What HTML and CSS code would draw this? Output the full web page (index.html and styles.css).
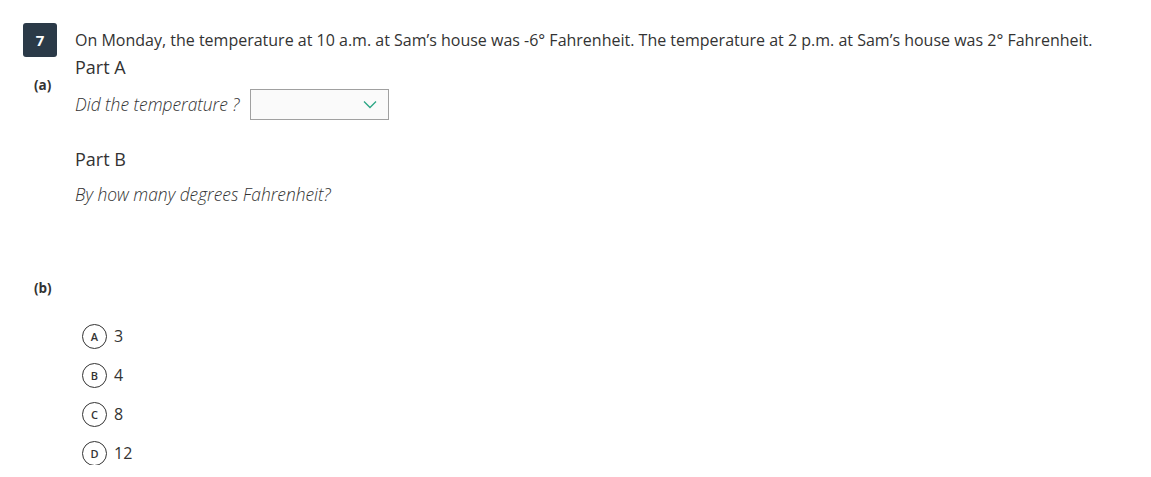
FILE: index.html
```html
<!DOCTYPE html>
<html>
<head>
<meta charset="utf-8">
<link rel="stylesheet" href="styles.css">
</head>
<body>
<div class="question">
  <div class="stem-row">
    <div class="gutter"><div class="badge">7</div></div>
    <div class="stem">On Monday, the temperature at 10 a.m. at Sam’s house was -6° Fahrenheit. The temperature at 2 p.m. at Sam’s house was 2° Fahrenheit.</div>
  </div>
  <div class="part part-a">
    <div class="gutter"><div class="label">(a)</div></div>
    <div class="content">
      <div class="part-title">Part A</div>
      <div class="prompt-row">
        <span class="prompt">Did the temperature ?</span>
        <div class="select">
          <svg class="chev" width="14" height="9" viewBox="0 0 14 9"><path d="M1 1.5 L7 7.5 L13 1.5" fill="none" stroke="#2aa584" stroke-width="1.3"/></svg>
        </div>
      </div>
      <div class="part-title part-b-title">Part B</div>
      <div class="prompt prompt-b">By how many degrees Fahrenheit?</div>
    </div>
  </div>
  <div class="part part-b">
    <div class="gutter"><div class="label label-b">(b)</div></div>
    <div class="content options">
      <div class="option"><span class="circle">A</span><span class="val">3</span></div>
      <div class="option"><span class="circle">B</span><span class="val">4</span></div>
      <div class="option"><span class="circle">C</span><span class="val">8</span></div>
      <div class="option"><span class="circle">D</span><span class="val">12</span></div>
    </div>
  </div>
</div>
</body>
</html>
```

FILE: styles.css
```css
html, body {
  margin: 0;
  padding: 0;
  background: #fff;
}
body {
  font-family: "Open Sans", "Noto Sans", sans-serif;
  color: #333;
}
.question {
  padding: 23px 0 0 23px;
}
.stem-row, .part {
  display: flex;
  align-items: flex-start;
}
.gutter {
  width: 52px;
  flex: none;
}
.badge {
  width: 34px;
  height: 34px;
  background: #2b3a48;
  color: #fff;
  border-radius: 3px;
  font-weight: 700;
  font-size: 15px;
  display: flex;
  align-items: center;
  justify-content: center;
}
.stem {
  font-size: 16px;
  line-height: 22px;
  padding-top: 6px;
}
.part-a {
  margin-top: -2px;
}
.label {
  font-size: 13.5px;
  font-weight: 700;
  line-height: 18px;
  padding-top: 21px;
  padding-left: 11px;
  color: #333;
}
.part-title {
  font-size: 18px;
  line-height: 24px;
}
.prompt-row {
  display: flex;
  align-items: center;
  margin-top: 10px;
}
.prompt {
  font-style: italic;
  font-weight: 300;
  font-size: 17.4px;
  line-height: 22px;
}
.prompt-row .prompt {
  padding-bottom: 2px;
}
.select {
  margin-left: 10px;
  width: 139px;
  height: 31px;
  border: 1px solid #a0a0a0;
  background: #fafafa;
  display: flex;
  align-items: center;
  justify-content: flex-end;
  padding-right: 11px;
  box-sizing: border-box;
}
.part-b-title {
  margin-top: 27px;
}
.prompt-b {
  margin-top: 12px;
}
.part-b {
  margin-top: 74px;
}
.label-b {
  padding-top: 0;
}
.options {
  padding-top: 45px;
  padding-left: 7px;
  display: flex;
  flex-direction: column;
  gap: 15px;
}
.option {
  display: flex;
  align-items: center;
  height: 24px;
}
.circle {
  width: 23px;
  height: 23px;
  border: 1px solid #333;
  border-radius: 50%;
  display: flex;
  align-items: center;
  justify-content: center;
  font-size: 11px;
  font-weight: 600;
}
.val {
  margin-left: 7px;
  font-size: 16px;
}
```
